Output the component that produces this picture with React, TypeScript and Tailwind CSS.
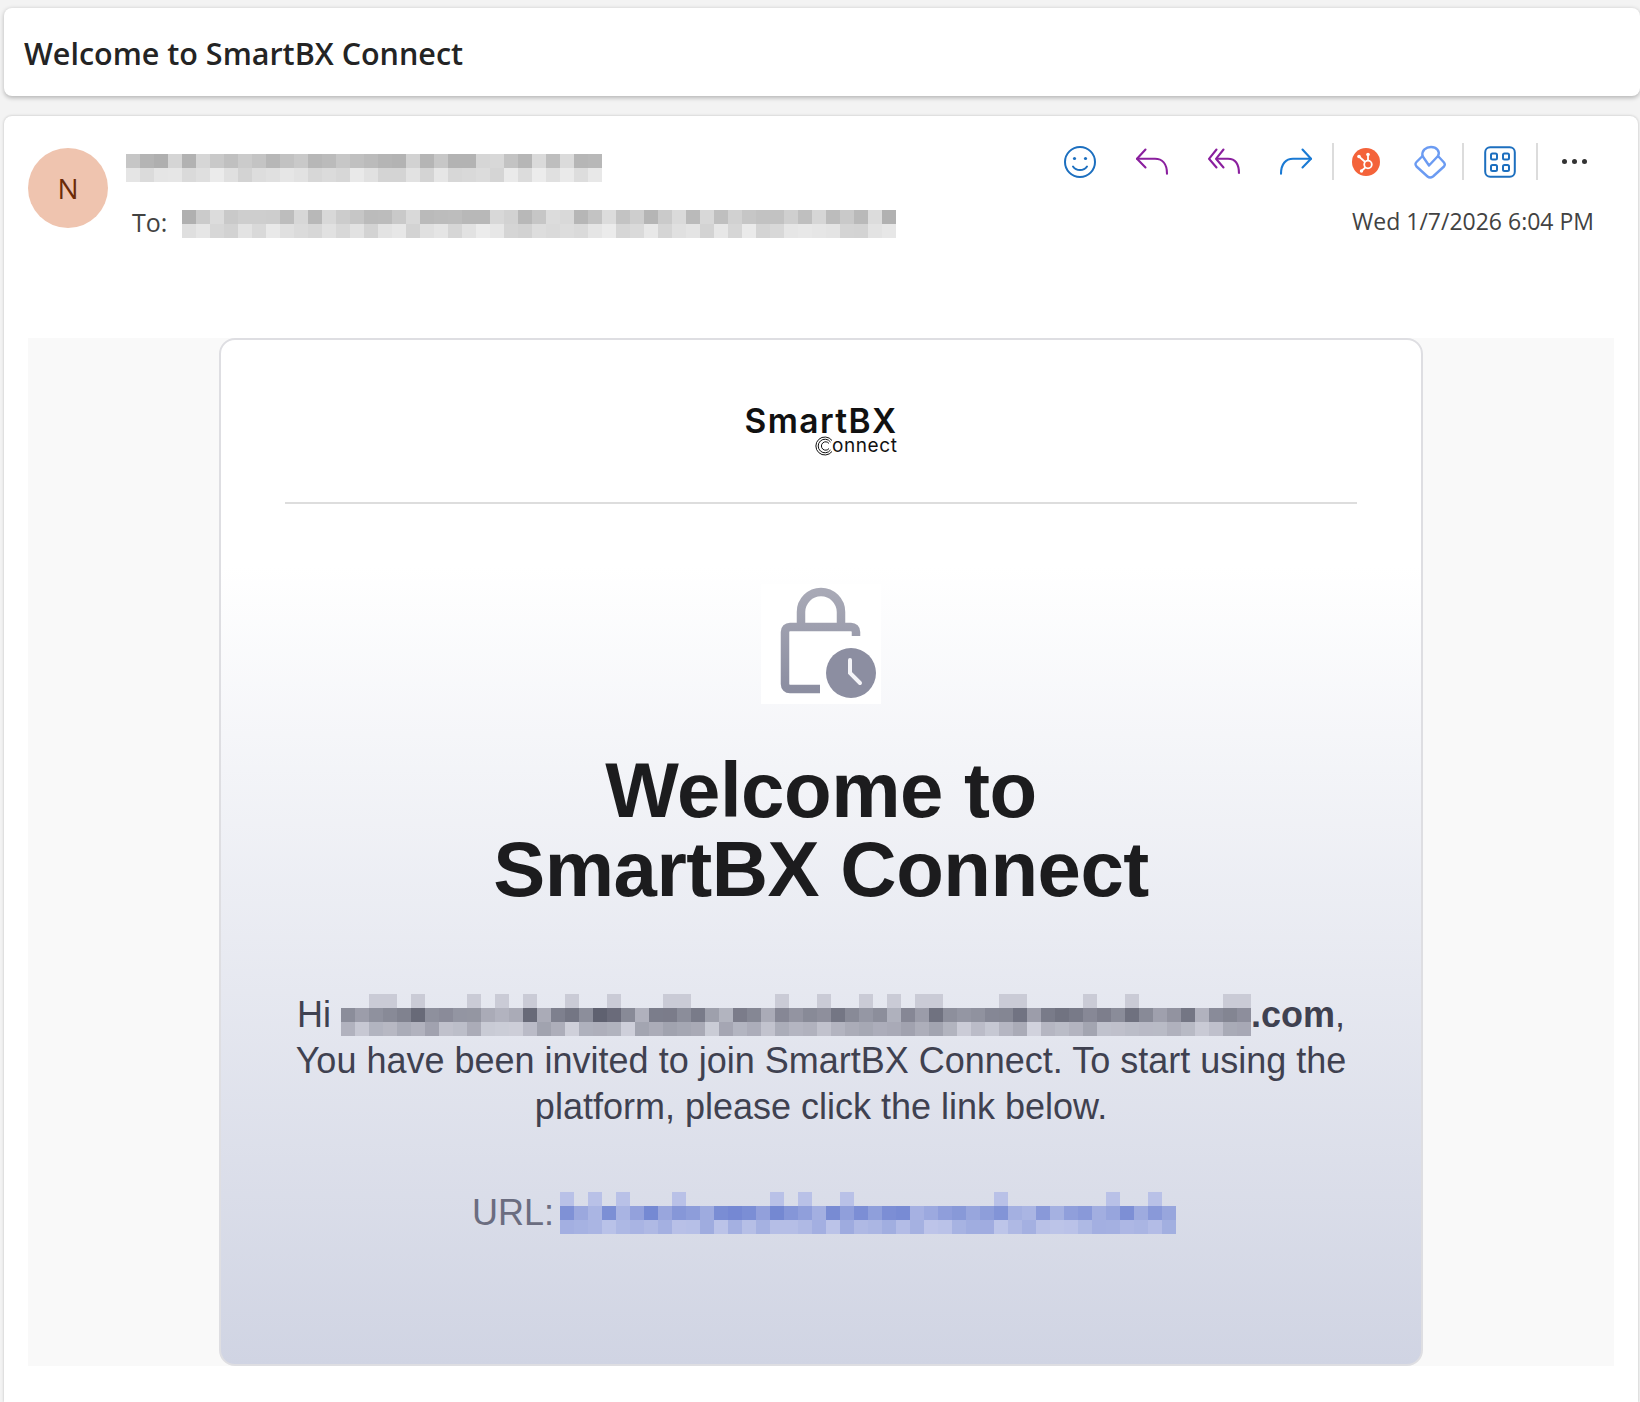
import React from 'react';

// pseudo random shades so the blurred blocks look like the mosaic in the picture
const shade = (seed: number, i: number) => {
  const x = Math.sin(seed * 37.1 + i * 12.9898) * 43758.5453;
  return x - Math.floor(x);
};

type MosaicProps = {
  count: number;
  seed: number;
  dark: number[];
  light: number[];
  fringe?: boolean;
};

const Mosaic: React.FC<MosaicProps> = ({ count, seed, dark, light, fringe }) => {
  const mix = (t: number) => {
    const c = dark.map((d, k) => Math.round(light[k] + (d - light[k]) * t));
    return `rgb(${c[0]},${c[1]},${c[2]})`;
  };
  return (
    <div className="flex flex-col">
      {fringe && (
        <div className="flex">
          {Array.from({ length: count }).map((_, i) => (
            <div key={i} className="h-[14px] w-[14px]" style={{ background: shade(seed + 5, i) > 0.72 ? mix(0.18) : 'transparent' }} />
          ))}
        </div>
      )}
      {[0, 1].map((r) => (
        <div key={r} className="flex">
          {Array.from({ length: count }).map((_, i) => (
            <div key={i} className="h-[14px] w-[14px]" style={{ background: mix(r === 0 ? 0.35 + shade(seed, i) * 0.65 : 0.12 + shade(seed + 1, i) * 0.38) }} />
          ))}
        </div>
      ))}
    </div>
  );
};

const Smile = () => (
  <svg width="34" height="34" viewBox="0 0 34 34" fill="none" stroke="#1c6fbf" strokeWidth="2" strokeLinecap="round">
    <circle cx="17" cy="17" r="15" />
    <circle cx="11.5" cy="13.5" r="1.6" fill="#1c6fbf" stroke="none" />
    <circle cx="22.5" cy="13.5" r="1.6" fill="#1c6fbf" stroke="none" />
    <path d="M10 21.5c1.6 2.4 4 3.6 7 3.6s5.400-1.200 7-3.600" />
  </svg>
);

const Reply = () => (
  <svg width="34" height="27" viewBox="0 0 34 27" fill="none" stroke="#8a1f9e" strokeWidth="2.1" strokeLinecap="round" strokeLinejoin="round">
    <path d="M10.500 1.500 2 10.800l8.500 8.700" />
    <path d="M2 10.800H20c7 0 12 5 12 15" />
  </svg>
);

const ReplyAll = () => (
  <svg width="34" height="27" viewBox="0 0 34 27" fill="none" stroke="#8a1f9e" strokeWidth="2.1" strokeLinecap="round" strokeLinejoin="round">
    <path d="M9.500 1.500 2 10.800l7.500 8.700" />
    <path d="M16.500 1.500 9 10.800l7.500 8.700" />
    <path d="M9 10.800H21c7 0 11 5 11 15" strokeLinecap="butt" />
  </svg>
);

const Forward = () => (
  <svg width="34" height="27" viewBox="0 0 34 27" fill="none" stroke="#1a7ad4" strokeWidth="2.1" strokeLinecap="round" strokeLinejoin="round">
    <path d="M23.500 1.500 32 10.800l-8.500 8.700" />
    <path d="M32 10.800H14C7 10.800 2 15.800 2 25.800" />
  </svg>
);

const Hubspot = () => (
  <svg width="30" height="30" viewBox="0 0 30 30">
    <circle cx="15" cy="15" r="14" fill="#f4633a" />
    <g stroke="#fff" strokeWidth="1.8" fill="none">
      <circle cx="17" cy="17.500" r="3.800" />
      <path d="M17 13.500V8.500M14.200 15 8.500 10M14.300 20.500 11 23.500" />
    </g>
    <circle cx="17" cy="7.500" r="1.800" fill="#fff" />
    <circle cx="8" cy="9.500" r="1.800" fill="#fff" />
    <circle cx="10.500" cy="24" r="1.700" fill="#fff" />
  </svg>
);

const Viva = () => (
  <svg width="34" height="34" viewBox="0 0 34 34" fill="none" stroke="#6b9bf2" strokeWidth="2.4" strokeLinejoin="round" strokeLinecap="round">
    <path d="M9.500 11 16 20.500 25 11l6 6.500q1.600 2 0 4L20 31.500q-3 2.200-5.500 0L3.500 21.500q-2-2.500 0-4.500z" />
    <path d="M9.500 11C8.500 5.500 13 2 18 2c5.500 0 9.500 4.500 7 9" />
  </svg>
);

const Apps = () => (
  <svg width="32" height="32" viewBox="0 0 32 32" fill="none" stroke="#1c6fbf" strokeWidth="2">
    <rect x="1.200" y="1.200" width="29.600" height="29.600" rx="5" />
    <rect x="7" y="7.500" width="6" height="6" rx="1.500" />
    <rect x="19" y="7.500" width="6" height="6" rx="1.500" />
    <rect x="7" y="19" width="6" height="6" rx="1.500" />
    <rect x="19" y="19" width="6" height="6" rx="1.500" />
  </svg>
);

const LockClock = () => (
  <svg width="120" height="120" viewBox="0 0 120 120" className="bg-white">
    <defs>
      <linearGradient id="lockFade" x1="0" y1="0" x2="0" y2="1">
        <stop offset="0" stopColor="#a8a9b6" />
        <stop offset="1" stopColor="#8c8ea1" />
      </linearGradient>
    </defs>
    <path
      d="M40 43V28c0-11 9-20 20-20s20 9 20 20v15M95 52v-4c0-3-2-5-5-5H29c-3 0-5 2-5 5v52c0 3 2 5 5 5h30"
      fill="none"
      stroke="url(#lockFade)"
      strokeWidth="8.500"
    />
    <circle cx="90" cy="89" r="25" fill="#8c8ea1" />
    <path d="M89 76V89L99 99" fill="none" stroke="#f4f4f8" strokeWidth="4" strokeLinecap="round" />
  </svg>
);

const Logo = () => (
  <div className="flex flex-col items-end font-['Inter',sans-serif] text-[#111]">
    <div className="mt-[1px] h-[28px] text-[33.5px] font-semibold leading-[28px] tracking-[1.4px]">SmartBX</div>
    <div className="mt-[1px] flex h-[20px] items-center text-[19px] leading-[20px] tracking-[0.6px]">
      <svg width="20" height="20" viewBox="0 0 20 20" fill="none" stroke="#111" strokeWidth="1" className="-mr-[3px]">
        <path d="M17 4.500A9 9 0 1 0 17 15.500" />
        <path d="M15.500 6A6.800 6.800 0 1 0 15.500 14" />
        <path d="M14 7.500A4.200 4.200 0 1 0 14 12.500" />
      </svg>
      onnect
    </div>
  </div>
);

const Divider = () => <div className="h-[37px] w-[2px] bg-[#dcdcdc]" />;

const Action: React.FC<{ children: React.ReactNode; width: string }> = ({ children, width }) => (
  <div className={`flex items-center justify-center ${width}`}>{children}</div>
);

export default function App() {
  return (
    <div className="flex h-[1402px] flex-col gap-[20px] overflow-hidden bg-[#f3f3f3] pl-[4px] pr-[2px] pt-[8px] font-['Open_Sans',sans-serif]">
      <div className="-mr-[2px] flex h-[88px] shrink-0 items-center rounded-[8px] bg-white pl-[20px] pt-[4px] shadow-[0_1.5px_4px_rgba(0,0,0,0.25)]">
        <h1 className="text-[30.5px] font-semibold text-[#242424]">Welcome to SmartBX Connect</h1>
      </div>

      <div className="flex-1 rounded-t-[8px] bg-white px-[24px] shadow-[0_0_3px_rgba(0,0,0,0.22)]">
        <div className="flex h-[222px]">
          <div className="mt-[32px] flex h-[80px] w-[80px] shrink-0 items-center justify-center rounded-full bg-[#efc4af] text-[28px] font-medium text-[#6b2a08]">N</div>
          <div className="ml-[18px] mt-[38px] flex flex-col gap-[28px]">
            <Mosaic count={34} seed={3} dark={[175, 175, 175]} light={[245, 245, 245]} />
            <div className="flex items-start">
              <span className="w-[56px] pl-[6px] text-[25px] leading-[24px] text-[#424242]">To:</span>
              <Mosaic count={51} seed={9} dark={[175, 175, 175]} light={[245, 245, 245]} />
            </div>
          </div>
          <div className="ml-auto flex flex-col items-end pr-[4px]">
            <div className="mt-[27px] flex h-[37px] items-center">
              <Action width="w-[72px]"><Smile /></Action>
              <Action width="w-[72px]"><Reply /></Action>
              <Action width="w-[72px]"><ReplyAll /></Action>
              <Action width="w-[72px]"><Forward /></Action>
              <Divider />
              <Action width="w-[64px]"><Hubspot /></Action>
              <Action width="w-[64px]"><Viva /></Action>
              <Divider />
              <Action width="w-[72px]"><Apps /></Action>
              <Divider />
              <div className="flex w-[72px] items-center justify-center gap-[5px]">
                <span className="h-[5px] w-[5px] rounded-full bg-[#333]" />
                <span className="h-[5px] w-[5px] rounded-full bg-[#333]" />
                <span className="h-[5px] w-[5px] rounded-full bg-[#333]" />
              </div>
            </div>
            <div className="mr-[16px] mt-[24px] text-[23px] text-[#424242]">Wed 1/7/2026 6:04 PM</div>
          </div>
        </div>

        <div className="flex h-[1028px] justify-center bg-[#f9f9f9]">
          <div className="flex h-[1028px] w-[1204px] flex-col items-center rounded-[16px] border-2 border-[#dedee2] bg-[linear-gradient(180deg,#ffffff_0%,#ffffff_22%,#d0d4e3_100%)] px-[64px] font-['Liberation_Sans',sans-serif]">
            <div className="mt-[66px] flex justify-center"><Logo /></div>
            <div className="mt-[46px] h-[2px] w-full bg-[#dddddd]" />
            <div className="mt-[80px]"><LockClock /></div>
            <div className="mt-[47px] text-center text-[78px] font-bold leading-[79px] tracking-[-0.5px] text-[#1c1c1e]">
              Welcome to<br />SmartBX Connect
            </div>
            <div className="mt-[83px] w-[1080px] text-center text-[36px] leading-[46px] text-[#3f4150]">
              <div className="flex items-center justify-center">
                <span>Hi&nbsp;</span>
                <Mosaic count={65} seed={5} dark={[95, 97, 112]} light={[225, 226, 236]} fringe />
                <span className="font-bold">.com</span>,
              </div>
              <div>You have been invited to join SmartBX Connect. To start using the platform, please click the link below.</div>
            </div>
            <div className="ml-[6px] mt-[56px] flex items-center text-[36px] text-[#6b6d80]">
              <span className="mr-[6px]">URL:</span>
              <Mosaic count={44} seed={7} dark={[115, 135, 210]} light={[200, 206, 236]} fringe />
            </div>
          </div>
        </div>
      </div>
    </div>
  );
}
